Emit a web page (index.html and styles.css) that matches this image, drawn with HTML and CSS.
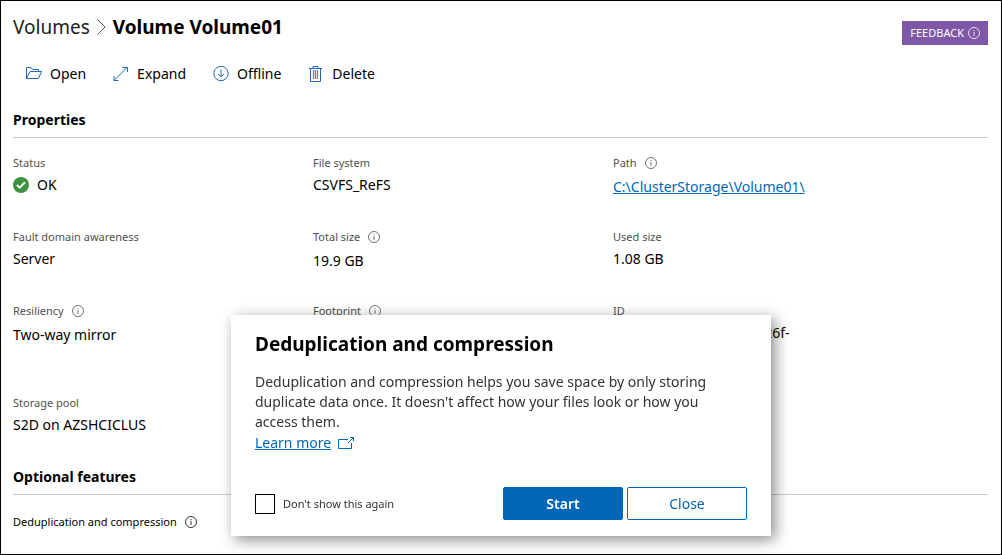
FILE: index.html
```html
<!DOCTYPE html>
<html lang="en">
<head>
<meta charset="utf-8">
<meta name="viewport" content="width=device-width, initial-scale=1">
<title>Volume Volume01</title>
<link rel="stylesheet" href="styles.css">
</head>
<body>
<svg class="sprite" aria-hidden="true">
  <symbol id="info" viewBox="0 0 12 12">
    <circle cx="6" cy="6" r="5.500" fill="none" stroke="currentColor" stroke-width=".8"/>
    <path d="M6 5v4M6 3v1.200" fill="none" stroke="currentColor" stroke-width=".8"/>
  </symbol>
</svg>
<main class="page">
  <header class="header">
    <nav class="breadcrumb" aria-label="Breadcrumb">
      <a class="crumb" href="#volumes">Volumes</a>
      <svg class="chevron" viewBox="0 0 9 16" aria-hidden="true"><path d="M.5.5 8 8 .5 15.500"/></svg>
      <h1 class="title">Volume Volume01</h1>
    </nav>
    <button class="feedback" type="button">FEEDBACK <svg class="info-icon"><use href="#info"/></svg></button>
  </header>

  <div class="toolbar" role="toolbar" aria-label="Volume actions">
    <button class="tool" type="button">
      <svg class="tool-icon" viewBox="0 0 16 16" aria-hidden="true"><path d="M.5 12.500V1.500h4.500l1.500 2h6v2M.5 12.500l3.500-7h11.500l-3 7z"/></svg>Open</button>
    <button class="tool" type="button">
      <svg class="tool-icon" viewBox="0 0 16 16" aria-hidden="true"><path d="M1 14.500 14 1.500M9.500 1.500H14.500V6M1 10v4.500h4.500"/></svg>Expand</button>
    <button class="tool" type="button">
      <svg class="tool-icon" viewBox="0 0 16 16" aria-hidden="true"><circle cx="8" cy="7.500" r="7.200"/><path d="M8 3.500v7.500M5 8l3 3 3-3"/></svg>Offline</button>
    <button class="tool" type="button">
      <svg class="tool-icon" viewBox="0 0 16 16" aria-hidden="true"><path class="bin-fill" d="M4.500 4h6v9h-6z"/><path d="M1 2.500h13M5 2.500v-2h5v2M2.500 2.500v13h10v-13"/><path class="bin-bars" d="M5.500 4v9M7.500 4v9M9.500 4v9"/></svg>Delete</button>
  </div>

  <section>
    <h2 class="section-title">Properties</h2>
    <dl class="properties">
      <div><dt>Status</dt><dd class="status"><svg class="status-icon" viewBox="0 0 16 16" aria-hidden="true"><circle cx="8" cy="8" r="8"/><path d="m4 8 2.700 2.700L12 5.300"/></svg>OK</dd></div>
      <div><dt>File system</dt><dd>CSVFS_ReFS</dd></div>
      <div><dt class="with-info">Path <svg class="info-icon"><use href="#info"/></svg></dt><dd><a class="link" href="#path">C:\ClusterStorage\Volume01\</a></dd></div>
      <div><dt>Fault domain awareness</dt><dd>Server</dd></div>
      <div><dt class="with-info">Total size <svg class="info-icon"><use href="#info"/></svg></dt><dd>19.9 GB</dd></div>
      <div><dt>Used size</dt><dd>1.08 GB</dd></div>
      <div><dt class="with-info">Resiliency <svg class="info-icon"><use href="#info"/></svg></dt><dd>Two-way mirror</dd></div>
      <div><dt class="with-info">Footprint <svg class="info-icon"><use href="#info"/></svg></dt></div>
      <div class="tall"><dt>ID</dt><dd class="identifier">803d7d2d-41b8-4d0e-9c6f-</dd></div>
      <div><dt>Storage pool</dt><dd>S2D on AZSHCICLUS</dd></div>
    </dl>
  </section>

  <section>
    <h2 class="section-title">Optional features</h2>
    <p class="feature">Deduplication and compression <svg class="info-icon"><use href="#info"/></svg></p>
  </section>
</main>

<div class="overlay">
  <div class="dialog" role="dialog" aria-labelledby="dialog-title">
    <h2 class="dialog-title" id="dialog-title">Deduplication and compression</h2>
    <p class="dialog-text">Deduplication and compression helps you save space by only storing duplicate data once. It doesn't affect how your files look or how you access them.</p>
    <p class="dialog-more"><a class="link" href="#learn">Learn more</a><svg class="external" viewBox="0 0 16 12" aria-hidden="true"><path d="M10 2.500H.5v9h13V6M10 6l5.500-5.500M12 .5h3.500v3.500"/></svg></p>
    <div class="dialog-footer">
      <label class="check"><input class="check-box" type="checkbox">Don't show this again</label>
      <div class="actions">
        <button class="button primary" type="button">Start</button>
        <button class="button" type="button">Close</button>
      </div>
    </div>
  </div>
</div>
</body>
</html>
```
FILE: styles.css
```css
* { box-sizing: border-box; }

body {
  margin: 0;
  background: #fff;
  color: #000;
  font: 14px/20px "Noto Sans", "Open Sans", sans-serif;
}

h1, h2, p, dl, dd { margin: 0; }
button, input { font: inherit; }
.sprite { position: absolute; width: 0; height: 0; }

.page {
  min-height: 100vh;
  padding: 12px 13px 12px 12px;
  border: 1px solid #000;
}

.header {
  display: flex;
  justify-content: space-between;
  height: 32px;
}

.breadcrumb {
  display: flex;
  align-items: center;
  gap: 7px;
  height: 28px;
  font-size: 19px;
}
.crumb { color: #222; text-decoration: none; }
.title { font-size: 19px; font-weight: 700; }
.chevron {
  width: 9px;
  height: 16px;
  fill: none;
  stroke: #555;
}

.feedback {
  display: flex;
  align-items: center;
  align-self: flex-end;
  gap: 4px;
  height: 24px;
  padding: 0 8px;
  border: 0;
  background: #7e57a6;
  color: #fff;
  font-size: 11px;
}

.info-icon { width: 12px; height: 12px; flex: none; }

.toolbar { display: flex; gap: 1px; margin-top: 13px; }
.tool {
  display: flex;
  align-items: center;
  gap: 8px;
  height: 32px;
  padding: 0 13px;
  border: 0;
  background: none;
  color: #000;
}
.tool-icon {
  width: 16px;
  height: 16px;
  fill: none;
  stroke: #2268b5;
}
.bin-fill { fill: #e6cfe3; stroke: none; }
.bin-bars { stroke: #8a78b8; }

.section-title {
  padding-bottom: 7px;
  border-bottom: 1px solid #ccc;
  font-size: 14px;
  font-weight: 700;
  line-height: 20px;
  margin-top: 20px;
}

.properties {
  display: grid;
  grid-template-columns: repeat(3, minmax(0, 300px));
  row-gap: 32px;
  margin: 17px 0 32px;
}
dt {
  margin-bottom: 4px;
  color: #505050;
  font-size: 11px;
  line-height: 16px;
}
.with-info {
  display: flex;
  align-items: center;
  gap: 8px;
  margin-bottom: 6px;
}
.status { display: flex; align-items: center; gap: 8px; }
.status-icon {
  width: 16px;
  height: 16px;
  fill: #3f9142;
}
.status-icon path { fill: none; stroke: #fff; stroke-width: 2; }
.tall { min-height: 60px; }
.identifier { max-width: 200px; }
.link { color: #0067b8; text-decoration: underline; }

.feature {
  display: flex;
  align-items: center;
  gap: 8px;
  margin-top: 19px;
  font-size: 11px;
  line-height: 16px;
}

.overlay {
  position: fixed;
  inset: 0;
  display: flex;
  align-items: flex-end;
  justify-content: center;
  padding-bottom: 19px;
}
.dialog {
  width: 540px;
  max-width: 100%;
  padding: 15px 24px 16px;
  background: #fff;
  box-shadow: 4px 4px 14px rgba(0, 0, 0, .45);
}
.dialog-title { font-size: 19px; font-weight: 700; line-height: 28px; }
.dialog-text { max-width: 472px; margin-top: 14px; color: #333; }
.dialog-more { display: flex; align-items: center; gap: 7px; line-height: 22px; }
.external {
  width: 16px;
  height: 12px;
  fill: none;
  stroke: #0067b8;
}
.dialog-footer {
  display: flex;
  align-items: center;
  justify-content: space-between;
  margin-top: 33px;
}
.check {
  display: flex;
  align-items: center;
  gap: 8px;
  color: #333;
  font-size: 11px;
}
.check-box {
  width: 20px;
  height: 20px;
  margin: 0;
  border: 1px solid #000;
  background: #fff;
  appearance: none;
}
.actions { display: flex; gap: 4px; }
.button {
  width: 120px;
  height: 33px;
  border: 1px solid #0067b8;
  border-radius: 2px;
  background: #fff;
  color: #0067b8;
}
.primary { background: #0067b8; color: #fff; font-weight: 600; }
```
